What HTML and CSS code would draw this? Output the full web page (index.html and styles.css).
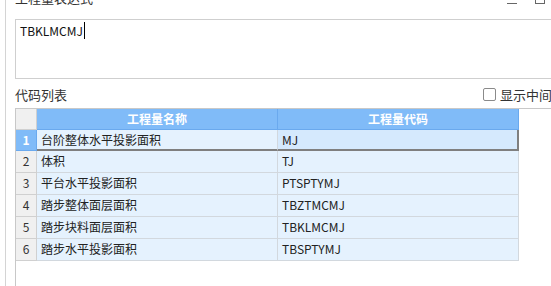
FILE: index.html
```html
<!DOCTYPE html>
<html lang="zh-CN">
<head>
    <meta charset="UTF-8">
    <title>工程量表达式</title>
    <link rel="stylesheet" href="styles.css">
</head>
<body>
    <div class="panel">
        <!-- Title bar, scrolled partly out of view -->
        <div class="title-row">
            <span class="title">工程量表达式</span>
            <div class="win-ctrls">
                <span class="btn-min"></span>
                <span class="btn-max"></span>
            </div>
        </div>

        <!-- Expression editor -->
        <div class="expr"><span class="expr-text">TBKLMCMJ</span></div>

        <div class="list-row">
            <span class="list-title">代码列表</span>
            <label class="show-mid"><span class="check"></span>显示中间结果</label>
        </div>

        <!-- Code list grid -->
        <div class="grid">
            <div class="grid-table">
                <div class="cell corner"></div>
                <div class="cell head">工程量名称</div>
                <div class="cell head">工程量代码</div>

                <div class="cell num current">1</div>
                <div class="cell name current-row">台阶整体水平投影面积</div>
                <div class="cell code current-row selected">MJ</div>

                <div class="cell num">2</div>
                <div class="cell name">体积</div>
                <div class="cell code">TJ</div>

                <div class="cell num">3</div>
                <div class="cell name">平台水平投影面积</div>
                <div class="cell code">PTSPTYMJ</div>

                <div class="cell num">4</div>
                <div class="cell name">踏步整体面层面积</div>
                <div class="cell code">TBZTMCMJ</div>

                <div class="cell num">5</div>
                <div class="cell name">踏步块料面层面积</div>
                <div class="cell code">TBKLMCMJ</div>

                <div class="cell num">6</div>
                <div class="cell name">踏步水平投影面积</div>
                <div class="cell code">TBSPTYMJ</div>
            </div>
        </div>
    </div>
</body>
</html>
```

FILE: styles.css
```css
/* General styles */
* {
    box-sizing: border-box;
}

body {
    margin: 0;
    width: 551px;
    height: 286px;
    overflow: hidden;
    background: #fff;
    font-family: "Noto Sans CJK SC", "Microsoft YaHei", sans-serif;
    font-size: 12px;
    color: #222;
}

.panel {
    margin-left: 5px;
    height: 286px;
    border-left: 1px solid #d4d4d4;
    padding-left: 9px;
    display: flex;
    flex-direction: column;
}

/* Title bar */
.title-row {
    display: flex;
    height: 19px;
    flex-shrink: 0;
}

.title {
    font-size: 13px;
    line-height: 18px;
    margin-top: -11px;
    color: #333;
}

.win-ctrls {
    margin-left: auto;
    margin-right: 6px;
    display: flex;
    align-items: flex-start;
    gap: 18px;
}

.btn-min {
    width: 10px;
    height: 1px;
    margin-top: 3px;
    background: #666;
}

.btn-max {
    width: 10px;
    height: 10px;
    margin-top: -6px;
    border: 1px solid #666;
}

/* Expression box */
.expr {
    height: 60px;
    flex-shrink: 0;
    border: 1px solid #cfcfcf;
    border-right: none;
    padding: 3px 4px;
    line-height: 16px;
    color: #111;
}

.expr-text {
    border-right: 1px solid #000;
    padding-right: 1px;
}

/* List header row */
.list-row {
    height: 29px;
    flex-shrink: 0;
    display: flex;
    align-items: center;
    padding-top: 1px;
}

.list-title {
    font-size: 13px;
    color: #333;
}

.show-mid {
    margin-left: auto;
    display: flex;
    align-items: center;
    gap: 4px;
    font-size: 13px;
    color: #333;
    white-space: nowrap;
    margin-right: -27px;
}

.check {
    width: 13px;
    height: 13px;
    border: 1px solid #8a8a8a;
    border-radius: 2px;
    background: #fff;
}

/* Grid */
.grid {
    flex: 1;
    border-top: 1px solid #c8c8c8;
    border-left: 1px solid #c8c8c8;
}

.grid-table {
    display: grid;
    grid-template-columns: 21px 241px 241px;
    grid-auto-rows: 22px;
    grid-template-rows: 21px 21px;
}

.cell {
    border-right: 1px solid #d2d8de;
    border-bottom: 1px solid #d2d8de;
    line-height: 20px;
    padding-left: 4px;
    white-space: nowrap;
    background: #e5f2fe;
}

.corner,
.num {
    background: #f0f0f0;
    border-color: #d0d0d0;
    text-align: center;
    padding-left: 0;
    color: #333;
}

.head {
    background: #80bbf8;
    border-right-color: #6aa9ee;
    border-bottom-color: #6aa9ee;
    color: #fff;
    font-weight: bold;
    text-align: center;
    padding-left: 0;
}

.num.current {
    background: #80bbf8;
    border-color: #6aa9ee;
    color: #fff;
    font-weight: bold;
}

.current-row {
    border-bottom: 2px solid #7f7f7f;
    line-height: 19px;
}

.selected {
    background: #d5e9fd;
    border-right: 2px solid #7f7f7f;
}
```
